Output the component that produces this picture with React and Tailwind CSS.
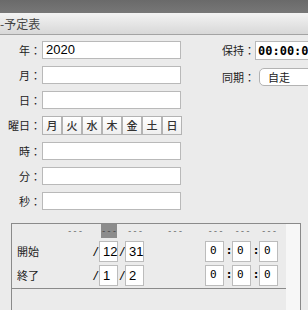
const jp = { fontFamily: '"Noto Sans CJK JP", "Noto Sans", sans-serif' };
const sans = { fontFamily: '"Liberation Sans", Arial, sans-serif' };
const mono = { fontFamily: '"DejaVu Sans Mono", "Liberation Mono", monospace' };

const Field = ({ label, value }) => (
    <div className="flex items-center h-[18px]">
        <span className="w-[41px] text-right text-[11px] leading-none text-[#222] whitespace-nowrap" style={jp}>{label}：</span>
        <div className="ml-[1px] w-[139px] h-[18px] bg-white border border-[#b9b9b9] flex items-center pl-[3px] text-[13px] text-black" style={sans}>
            {value}
        </div>
    </div>
);

const Dash = ({ active }) => (
    <div className={`w-[16px] h-[14px] flex items-center justify-center whitespace-nowrap text-[9px] leading-none ${active ? 'bg-[#8c8c8c] text-[#444]' : 'text-[#666]'}`} style={mono}>
        ---
    </div>
);

const Box = ({ value, monoFont }) => (
    <div className={`h-[21px] w-[19px] bg-white border border-[#bcbcbc] flex items-center pl-[3px] text-black ${monoFont ? 'text-[11px] pl-[4px]' : 'text-[13px]'}`} style={monoFont ? mono : sans}>
        {value}
    </div>
);

const Sep = ({ ch, monoFont }) => (
    <div className={`h-[21px] flex items-center justify-center text-black ${monoFont ? 'text-[11px] font-bold' : 'text-[13px] italic'}`} style={monoFont ? mono : sans}>
        {ch}
    </div>
);

const App = () => {
    const days = ['月', '火', '水', '木', '金', '土', '日'];

    return (
        <div className="w-[308px] h-[310px] overflow-hidden bg-[#ebebeb] flex flex-col">
            <div className="h-[13px] bg-gradient-to-b from-[#6a6a6a] to-[#777777] shrink-0"></div>
            <div className="h-[22px] bg-gradient-to-b from-[#f3f3f3] to-[#d8d8d8] border-b border-[#a3a3a3] flex items-center shrink-0">
                <span className="text-[12px] leading-none text-[#444]" style={jp}>-予定表</span>
            </div>

            <div className="flex pt-[6px]">
                {/* left form */}
                <div className="flex flex-col gap-[7px] w-[182px] shrink-0">
                    <Field label="年" value="2020" />
                    <Field label="月" />
                    <Field label="日" />
                    <div className="flex items-center h-[19px]">
                        <span className="w-[41px] text-right text-[11px] leading-none text-[#222] whitespace-nowrap" style={jp}>曜日：</span>
                        <div className="ml-[1px] flex">
                            {days.map((d) => (
                                <div key={d} className="w-[20px] h-[19px] border border-[#b3b3b3] bg-gradient-to-b from-white to-[#efefef] flex items-center justify-center text-[11px] font-medium text-[#333]" style={jp}>
                                    {d}
                                </div>
                            ))}
                        </div>
                    </div>
                    <Field label="時" />
                    <Field label="分" />
                    <Field label="秒" />
                </div>

                {/* right form */}
                <div className="ml-[40px] flex flex-col gap-[8px] shrink-0">
                    <div className="flex items-center h-[19px]">
                        <span className="w-[33px] text-[11px] leading-none text-[#222] whitespace-nowrap" style={jp}>保持：</span>
                        <div className="w-[70px] h-[19px] bg-white border border-[#b9b9b9] flex items-center pl-[2px] text-[12px] font-bold text-black" style={mono}>
                            00:00:00
                        </div>
                    </div>
                    <div className="flex items-center h-[18px]">
                        <span className="w-[33px] text-[11px] leading-none text-[#222] whitespace-nowrap" style={jp}>同期：</span>
                        <div className="ml-[4px] w-[70px] h-[18px] bg-white border border-[#b3b3b3] rounded-l-[5px] flex items-center pl-[8px] text-[11px] text-[#222]" style={jp}>
                            自走
                        </div>
                    </div>
                </div>
            </div>

            {/* period panel */}
            <div className="mt-[13px] ml-[11px] w-[290px] h-[100px] border border-[#8a8a8a] flex shrink-0">
                <div className="w-[274px]">
                    <div className="border-b border-[#8a8a8a] pb-[2px]">
                        <div className="grid grid-cols-[55px_25px_7px_20px_6px_20px_60px_21px_6px_21px_6px_20px] gap-y-[3px] items-center">
                            {/* header */}
                            <div></div>
                            <div className="flex"><Dash /></div>
                            <div></div>
                            <div className="flex justify-center"><Dash active /></div>
                            <div></div>
                            <div className="flex justify-center"><Dash /></div>
                            <div className="flex pl-[22px]"><Dash /></div>
                            <div className="flex justify-center"><Dash /></div>
                            <div></div>
                            <div className="flex justify-center"><Dash /></div>
                            <div></div>
                            <div className="flex justify-center"><Dash /></div>

                            {/* start */}
                            <div className="pl-[5px] text-[11px] text-[#222]" style={jp}>開始</div>
                            <div></div>
                            <Sep ch="/" />
                            <Box value="12" />
                            <Sep ch="/" />
                            <Box value="31" />
                            <div></div>
                            <Box value="0" monoFont />
                            <Sep ch=":" monoFont />
                            <Box value="0" monoFont />
                            <Sep ch=":" monoFont />
                            <Box value="0" monoFont />

                            {/* end */}
                            <div className="pl-[5px] text-[11px] text-[#222]" style={jp}>終了</div>
                            <div></div>
                            <Sep ch="/" />
                            <Box value="1" />
                            <Sep ch="/" />
                            <Box value="2" />
                            <div></div>
                            <Box value="0" monoFont />
                            <Sep ch=":" monoFont />
                            <Box value="0" monoFont />
                            <Sep ch=":" monoFont />
                            <Box value="0" monoFont />
                        </div>
                    </div>
                </div>
                <div className="w-[14px] bg-[#f7f7f7]"></div>
            </div>
        </div>
    );
};

export default App;
